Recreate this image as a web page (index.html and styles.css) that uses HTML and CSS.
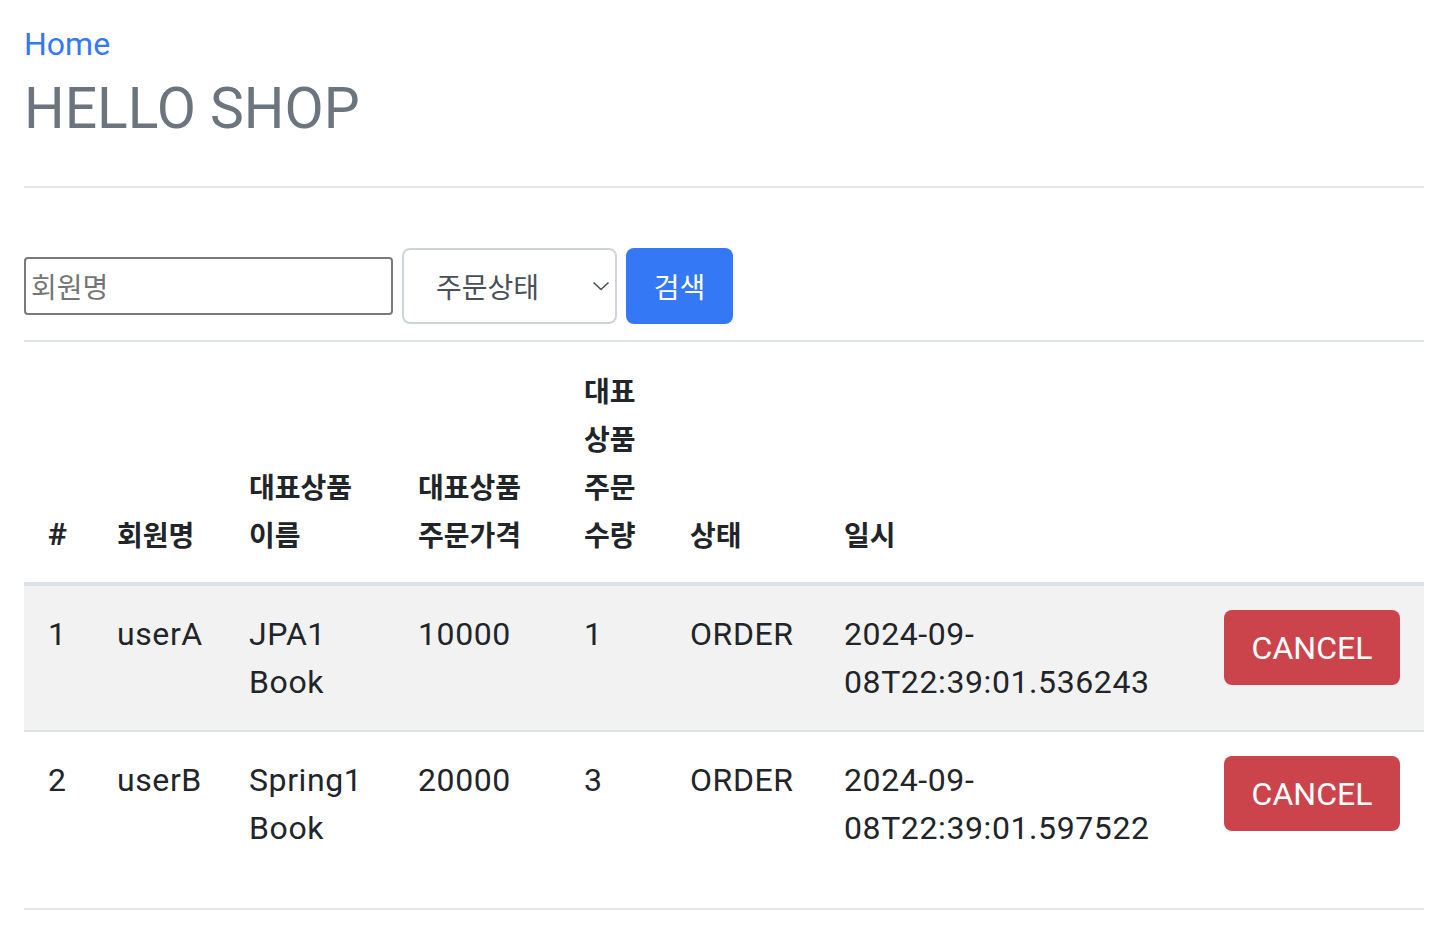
FILE: index.html
```html
<!DOCTYPE html>
<html lang="ko">
<head>
<meta charset="utf-8">
<title>HELLO SHOP</title>
<link rel="stylesheet" href="styles.css">
</head>
<body>
<div class="container">
  <div class="header">
    <a class="home-link" href="#">Home</a>
    <h3 class="brand">HELLO SHOP</h3>
  </div>
  <hr class="divider">
  <form class="search-form">
    <input class="name-input" type="text" placeholder="회원명">
    <div class="select-wrap">
      <select class="status-select">
        <option>주문상태</option>
        <option>ORDER</option>
        <option>CANCEL</option>
      </select>
      <svg class="chevron" width="18" height="10" viewBox="0 0 18 10"><path d="M1.5 1.5 L9 8.5 L16.5 1.5" fill="none" stroke="#4a4f55" stroke-width="1.6"/></svg>
    </div>
    <button class="btn-search" type="button">검색</button>
  </form>
  <table class="orders">
    <colgroup>
      <col style="width:69px"><col style="width:132px"><col style="width:169px"><col style="width:166px">
      <col style="width:106px"><col style="width:154px"><col style="width:380px"><col style="width:224px">
    </colgroup>
    <thead>
      <tr>
        <th class="th-num">#</th>
        <th>회원명</th>
        <th>대표상품 이름</th>
        <th>대표상품 주문가격</th>
        <th>대표상품 주문수량</th>
        <th>상태</th>
        <th>일시</th>
        <th></th>
      </tr>
    </thead>
    <tbody>
      <tr class="striped">
        <td>1</td>
        <td>userA</td>
        <td>JPA1 Book</td>
        <td>10000</td>
        <td>1</td>
        <td>ORDER</td>
        <td>2024-09-08T22:39:01.536243</td>
        <td><a class="btn-cancel" href="#">CANCEL</a></td>
      </tr>
      <tr>
        <td>2</td>
        <td>userB</td>
        <td>Spring1 Book</td>
        <td>20000</td>
        <td>3</td>
        <td>ORDER</td>
        <td>2024-09-08T22:39:01.597522</td>
        <td><a class="btn-cancel" href="#">CANCEL</a></td>
      </tr>
    </tbody>
  </table>
  <div class="footer"></div>
</div>
</body>
</html>
```
FILE: styles.css
```css
* { box-sizing: border-box; }
html, body { margin: 0; padding: 0; background: #fff; }
body {
  font-family: Roboto, "Noto Sans CJK KR", sans-serif;
  font-size: 32px;
  line-height: 48px;
  color: #212529;
}
.container {
  width: 1400px;
  margin-left: 24px;
  padding-top: 20px;
}
.header { display: flex; flex-direction: column; align-items: flex-start; }
.home-link {
  color: #3478f6;
  text-decoration: none;
  font-size: 32px;
  line-height: 48px;
}
.brand {
  margin: 7px 0 0;
  font-size: 57px;
  line-height: 67px;
  font-weight: 400;
  color: #6c757d;
}
.divider {
  margin: 44px 0 0;
  border: 0;
  border-top: 2px solid #e6e6e6;
  height: 0;
}
.search-form {
  display: flex;
  align-items: center;
  gap: 9px;
  margin-top: 60px;
  margin-bottom: 16px;
  height: 76px;
}
.name-input {
  width: 369px;
  height: 58px;
  border: 2px solid #7a7a7a;
  border-radius: 4px;
  padding: 0 5px;
  font-family: "Noto Sans CJK KR", sans-serif;
  font-size: 28px;
  color: #212529;
  background: #fff;
  outline: none;
}
.name-input::placeholder { color: #757575; }
.select-wrap { position: relative; }
.status-select {
  appearance: none;
  -webkit-appearance: none;
  width: 215px;
  height: 76px;
  border: 2px solid #ced4da;
  border-radius: 8px;
  background: #fff;
  padding: 0 0 0 32px;
  font-family: "Noto Sans CJK KR", sans-serif;
  font-size: 28px;
  color: #495057;
}
.chevron {
  position: absolute;
  right: 7px;
  top: 33px;
  pointer-events: none;
}
.btn-search {
  width: 107px;
  height: 76px;
  border: 0;
  border-radius: 8px;
  background: #3478f6;
  color: #fff;
  font-family: "Noto Sans CJK KR", sans-serif;
  font-size: 28px;
  padding: 0;
}
.orders {
  width: 1400px;
  table-layout: fixed;
  border-collapse: collapse;
  margin-bottom: 32px;
}
.orders th, .orders td {
  padding: 24px;
  text-align: left;
  border-top: 2px solid #dee2e6;
}
.orders th {
  vertical-align: bottom;
  border-bottom: 4px solid #dee2e6;
  font-weight: 700;
  font-size: 28px;
  line-height: 48px;
  font-family: "Noto Sans CJK KR", sans-serif;
}
.orders th.th-num { font-family: Roboto, sans-serif; font-size: 32px; }
.orders td { vertical-align: top; letter-spacing: 0.6px; }
.orders tr.striped td { background: #f2f2f2; }
.btn-cancel {
  display: flex;
  align-items: center;
  justify-content: center;
  width: 176px;
  height: 75px;
  border-radius: 8px;
  background: #cc444b;
  color: #fff;
  text-decoration: none;
  font-size: 32px;
  letter-spacing: 0;
}
.footer {
  border-top: 2px solid #e5e5e5;
  height: 40px;
}
```
